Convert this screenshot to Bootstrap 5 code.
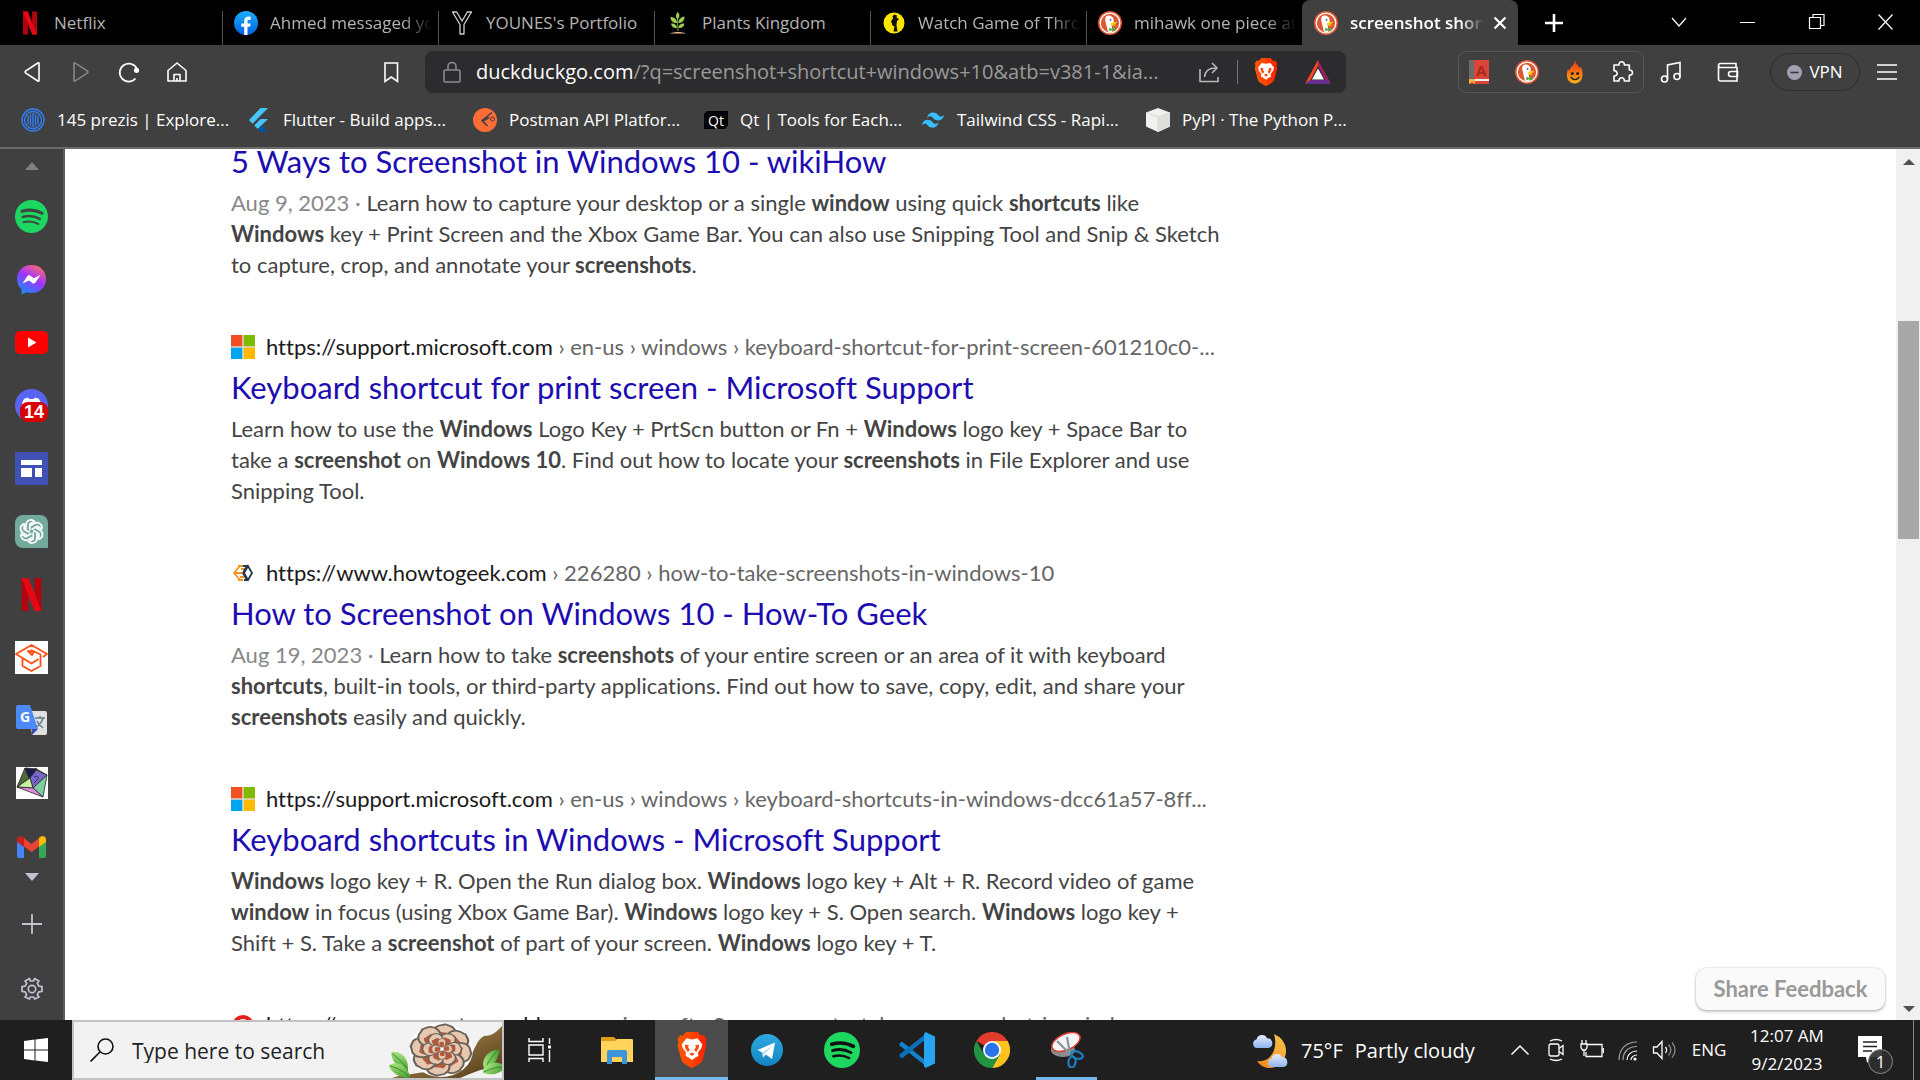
<!DOCTYPE html>
<html lang="en">
<head>
<meta charset="utf-8">
<meta name="viewport" content="width=device-width, initial-scale=1">
<title>screenshot shortcut windows 10 at DuckDuckGo</title>
<link href="https://cdn.jsdelivr.net/npm/bootstrap@5.3.0/dist/css/bootstrap.min.css" rel="stylesheet">
<style>
  :root { --chrome: #404040; --ui: "Open Sans", "Noto Sans", sans-serif; --page: Lato, "Open Sans", sans-serif; }
  body { font-family: var(--ui); font-size: 17px; line-height: 24px; background: #fff; }
  svg { display: block; flex: none; }
  button, .plain { background: none; border: 0; padding: 0; color: inherit; text-decoration: none; }
  .ico { width: 24px; height: 24px; }

  /* tab strip */
  .tabstrip { height: 45px; background: #000; color: #b4b4b4; padding-left: 6px; }
  .tabitem { width: 216px; padding: 0 6px 0 12px; gap: 12px; position: relative; }
  .tabitem + .tabitem:not(.current)::before { content: ""; position: absolute; left: 0; top: 11px; bottom: 0; width: 1px; background: #555; }
  .tabitem .label { -webkit-mask-image: linear-gradient(90deg, #000 82%, transparent); mask-image: linear-gradient(90deg, #000 82%, transparent); }
  .tabitem .label.whole { -webkit-mask-image: none; mask-image: none; }
  .tabitem.current { background: var(--chrome); color: #fff; border-radius: 8px 8px 0 0; font-weight: 600; }
  .tabitem.current .label { margin-right: -8px; }
  .winbtn { width: 69px; height: 45px; color: #fff; }

  /* toolbar */
  .toolbar { background: var(--chrome); color: #fff; padding: 6px 21px 0; }
  .navset { gap: 24px; }
  .bookmark { margin: 0 22px 0 190px; }
  .address { height: 42px; background: #2c2c2e; border-radius: 8px; padding: 0 15px; margin-right: 112px; gap: 12px; }
  .address .host { color: #fff; }
  .urltext { font-size: 20px; color: #9a9a9a; }
  .address .split { width: 1px; height: 24px; background: #77777a; margin: 0 4px; }
  .address .rewards { margin-left: 15px; }
  .extset { height: 42px; border: 1px solid #585858; border-radius: 8px; padding: 0 8px; gap: 24px; }
  .vpn { width: 90px; height: 38px; border: 1px solid #2c2c2c; border-radius: 19px; gap: 7px; margin: 0 15px 0 30px; }

  /* bookmarks */
  .bookmarks { background: var(--chrome); color: #fff; height: 56px; padding-left: 21px; display: grid; grid-template-columns: 226px 226px 231px 217px 225px 1fr; border-bottom: 2px solid #6b6b6b; }
  .bookmarks a { gap: 12px; }

  /* side panel */
  .dock { width: 65px; background: var(--chrome); border-right: 2px solid #5c5c5c; padding-top: 13px; color: #c3c3d0; }
  .dock .apps { gap: 30px; margin: 30px 0 10px; }
  .dock .apps button { width: 33px; height: 33px; position: relative; }
  .dock .count { position: absolute; right: 0; bottom: 0; width: 28px; height: 20px; border-radius: 8px; background: #d90000; color: #fff; font: bold 18px/20px "Liberation Sans", sans-serif; }

  /* results */
  .results { width: 1020px; padding-left: 166px; margin-top: -8px; font-family: var(--page); font-size: 22px; line-height: 31px; color: #444; font-variant-ligatures: none; }
  .hit { margin-bottom: 52px; white-space: nowrap; }
  .hit .site { height: 30px; gap: 11px; line-height: 30px; color: #666; }
  .hit .site b { font-weight: 400; color: #1a1a1a; }
  .hit h2 { font-size: 31px; line-height: 40px; font-weight: 400; margin: 5px 0 6px; }
  .hit h2 a { color: #1d0db0; text-decoration: none; }
  .hit p { margin: 0; }
  .hit .when { color: #888; }
  .feedback { position: absolute; right: 11px; bottom: 10px; width: 189px; height: 42px; border-radius: 10px; background: #fafafa; color: #999; font: bold 22px/42px var(--page); box-shadow: 0 0 2px rgba(0,0,0,.25), 0 2px 3px rgba(0,0,0,.2); }
  .scroll { width: 24px; background: #f0f0f0; padding: 10px 1px 8px 2px; }
  .scroll .thumb { width: 21px; height: 218px; margin-top: 156px; background: #a8a8a8; }

  /* taskbar */
  .taskbar { height: 60px; background: #1f1f1f; color: #fff; }
  .start { width: 72px; }
  .find { width: 432px; background: #f2f2f2; border: 2px solid #c2c2c2; padding-left: 16px; gap: 18px; overflow: hidden; position: relative; }
  .find input { width: 220px; border: 0; background: none; outline: 0; font-size: 21px; color: #222; padding: 2px 0 0; }
  .find input::placeholder { color: #222; opacity: 1; }
  .find .bloom { position: absolute; right: -2px; top: 0; }
  .pinset { gap: 2px; margin-left: 4px; }
  .pinset button { width: 73px; height: 60px; }
  .pinset .active { background: #4b4b4b; box-shadow: inset 0 -3px #76b9ed; }
  .pinset .open { background: linear-gradient(#76b9ed, #76b9ed) center bottom / 61px 3px no-repeat; }
  .weather { width: 250px; font-size: 20px; gap: 12px; padding-top: 2px; }
  .tray { width: 36px; height: 60px; }
  .lang { width: 50px; margin-left: 2px; }
  .clock { width: 90px; margin-left: 8px; line-height: 28px; }
  .notes { width: 75px; position: relative; }
  .notes .count { position: absolute; left: 36px; top: 29px; width: 25px; height: 25px; border-radius: 50%; background: rgba(45,45,45,.9); border: 1px solid #888; font-size: 17px; line-height: 23px; }
  .peek { width: 7px; border-left: 1px solid #888; margin-left: 6px; }
</style>
<script src="https://cdn.jsdelivr.net/npm/bootstrap@5.3.0/dist/js/bootstrap.bundle.min.js"></script>
</head>
<body class="vh-100 d-flex flex-column overflow-hidden">

<svg width="0" height="0" class="position-absolute" aria-hidden="true">
  <defs>
    <linearGradient id="gFb" x1="0" y1="0" x2="0" y2="1"><stop offset="0" stop-color="#19afff"/><stop offset="1" stop-color="#0062e0"/></linearGradient>
    <linearGradient id="gMs" x1=".2" y1="1" x2=".75" y2="0"><stop offset="0" stop-color="#0a93ff"/><stop offset=".55" stop-color="#a033ff"/><stop offset="1" stop-color="#ff6a70"/></linearGradient>
    <linearGradient id="gBr" x1="0" y1="0" x2="1" y2="0"><stop offset="0" stop-color="#ff5601"/><stop offset=".5" stop-color="#ff4500"/><stop offset="1" stop-color="#ff1f01"/></linearGradient>
    <linearGradient id="gTg" x1="0" y1="0" x2="0" y2="1"><stop offset="0" stop-color="#2fa9e0"/><stop offset="1" stop-color="#1285c2"/></linearGradient>
    <linearGradient id="gFl" x1="0" y1="0" x2="0" y2="1"><stop offset="0" stop-color="#e8341c"/><stop offset=".6" stop-color="#ff7a12"/><stop offset="1" stop-color="#f7b416"/></linearGradient>
    <linearGradient id="gMo" x1="1" y1="0" x2="0" y2="1"><stop offset="0" stop-color="#f7c64a"/><stop offset="1" stop-color="#f5821f"/></linearGradient>
    <linearGradient id="gCl" x1="0" y1="0" x2="0" y2="1"><stop offset="0" stop-color="#e4eefc"/><stop offset="1" stop-color="#8fb4ee"/></linearGradient>
    <linearGradient id="gLog" x1="0" y1="0" x2="1" y2="1"><stop offset="0" stop-color="#b39564"/><stop offset=".5" stop-color="#8a6a3b"/><stop offset="1" stop-color="#4e3817"/></linearGradient>
    <linearGradient id="gLeaf" x1="0" y1="0" x2="1" y2="1"><stop offset="0" stop-color="#b4ee88"/><stop offset="1" stop-color="#3f9a2e"/></linearGradient>
    <g id="petal"><path d="M-3-5C-10-9-12-18-8-22c2-3 5-2 7-4 3 1 6 0 8 3 4 4 3 13-3 18z" fill="#e6c8b0" stroke="#6a625a" stroke-width="1.800"/><path d="M-3-5C-7-9-8-15-5-18c3 1 6-1 9 1 2 4 1 8-1 12z" fill="#b25a3c"/></g>
  </defs>
  <symbol id="netflix" viewBox="0 0 20 33"><path d="M0 0h7v33H0zM13 0h7v33h-7z" fill="#b1060f"/><path d="M0 0h7l13 33h-7z" fill="#e50914"/></symbol>
  <symbol id="ddg" viewBox="0 0 24 24"><circle cx="12" cy="12" r="12" fill="#de5833"/><circle cx="12" cy="12" r="9.800" fill="none" stroke="#fff" stroke-width="1.300"/><path d="M8 5.500c1.500-1.600 5-1.300 6.400.6 1.400 1.800 1.500 3.600 1.300 5.600l-2 2.400.8 6.800c-2 .5-3.600.2-4.600-.3L7.600 11C7 9 7 7 8 5.500z" fill="#fff"/><circle cx="12.600" cy="8.800" r=".9" fill="#2d4f8e"/><path d="M13 12.200c2-1.100 4-1.400 6-1-.6 1.400-2.400 1.700-3.600 2.100 1 .6 2 .3 2.800.4-1 1.300-3.600 1.200-5 .5z" fill="#fdd20a"/><path d="M11 16.800l3 1 3.400-1.200.2 3.400-3.200-.8-3 1.100z" fill="#43b048"/></symbol>
  <symbol id="spotify" viewBox="0 0 33 33"><circle cx="16.500" cy="16.500" r="16.500" fill="#1ed760"/><g fill="none" stroke="var(--ink,#262626)" stroke-linecap="round"><path d="M7 11.200c7-2 14-1.300 20 2" stroke-width="3.200"/><path d="M7.800 17c6-1.700 12-.9 17 1.900" stroke-width="2.600"/><path d="M8.500 22.200c5-1.300 10-.8 14.600 1.700" stroke-width="2.200"/></g></symbol>
  <symbol id="brave" viewBox="0 0 30 36"><path d="M9 0h12l3 3.500 3-.3 2.500 4-1 3 1 3-4 15c-1 3-6 5.500-10.500 7.800C10.500 33.700 5.500 31.200 4.500 28.200L.5 13.200l1-3-1-3 2.500-4 3 .3z" fill="url(#gBr)"/><path d="M15 7.500l5.500-1.200 4.700 5.900-.8 3.800-3.400 4.500.4 3.500-3 1.500L15 28l-3.400-2.500-3-1.500.4-3.500L5.600 16l-.8-3.800 4.700-5.900z" fill="#fff"/><path d="M8 12.500l4 .7-1 1.700 1.800 3-2 2.200-2.600-4zM22 12.500l-4 .7 1 1.700-1.800 3 2 2.200 2.600-4zM12.300 21.800l2.700-1.400 2.700 1.400-2.700 2.200z" fill="#ff4a10"/></symbol>
  <symbol id="mslogo" viewBox="0 0 24 24"><path d="M0 0h24v24H0z" fill="#e4dcd8"/><path d="M0 0h11.300v11.300H0z" fill="#f25022"/><path d="M12.700 0H24v11.300H12.700z" fill="#7fba00"/><path d="M0 12.700h11.300V24H0z" fill="#00a4ef"/><path d="M12.700 12.700H24V24H12.700z" fill="#ffb900"/></symbol>
  <symbol id="cloud" viewBox="0 0 24 16"><path d="M5 16a5 5 0 0 1-.5-9.800A6.500 6.500 0 0 1 16.800 5 5.600 5.600 0 0 1 18.500 16z" fill="url(#gCl)"/></symbol>
  <symbol id="leaf" viewBox="0 0 30 16"><path d="M0 6C8-3 24 0 30 15 18 18 6 15 0 6z" fill="url(#gLeaf)"/><path d="M2 6.500C12 7 22 9 29 14.500" stroke="#2f7d24" fill="none"/></symbol>
</svg>

<header>
  <div class="tabstrip d-flex" role="tablist">
    <button class="tabitem d-flex align-items-center" role="tab"><svg class="ico" viewBox="0 0 24 24"><use href="#netflix" x="5" width="14" height="24"/></svg><span class="label whole text-nowrap overflow-hidden">Netflix</span></button>
    <button class="tabitem d-flex align-items-center" role="tab"><svg class="ico" viewBox="0 0 24 24"><circle cx="12" cy="12" r="12" fill="url(#gFb)"/><path d="M10.200 24v-8.200H7.300v-3.400h2.900v-2.200c0-3 1.700-4.600 4.400-4.600l2.100.2v2.900h-1.400c-1.400 0-1.800.8-1.800 1.700v2h3.100l-.5 3.400h-2.600V24z" fill="#fff"/></svg><span class="label text-nowrap overflow-hidden">Ahmed messaged you</span></button>
    <button class="tabitem d-flex align-items-center" role="tab"><svg class="ico" viewBox="0 0 24 24"><path d="M2.500 1h4.200L12 10l5.300-9h4.200L14 13.500V23h-4v-9.500z" fill="none" stroke="#d0d0d0" stroke-width="1.300" stroke-linejoin="round"/></svg><span class="label whole text-nowrap overflow-hidden">YOUNES's Portfolio</span></button>
    <button class="tabitem d-flex align-items-center" role="tab"><svg class="ico" viewBox="0 0 24 24"><path d="M12 20C12 15 11 10 12 3" stroke="#7cb342" fill="none"/><path d="M11.800 8C9 7 9.500 3 12 1c2 3 2 5-.2 7zM11 12C7 12 4.500 10 4.500 6 8 6 11 8 11 12zM12.500 12c0-4 2.500-6 6-6.500 0 4-2 6.500-6 6.500zM11 17c-3 .5-5.500-1-6-4.500 3-.5 6 1 6 4.500zM12.500 17c0-3.500 2.500-5 6-4.500-.5 3.500-3 5-6 4.500z" fill="#9ccc50"/><path d="M4 22.500c4-2 12-2 16 0z" fill="#e9b98c"/></svg><span class="label whole text-nowrap overflow-hidden">Plants Kingdom</span></button>
    <button class="tabitem d-flex align-items-center" role="tab"><svg class="ico" viewBox="0 0 24 24"><circle cx="12" cy="12" r="10.500" fill="#ffe600"/><path d="M12.500 3.500l2.500 1-.5 2 2.500 1.500-2 2-.5 4 1 6.500h-4l1-5-2-1-1.500-4.500 2-2.500-.5-2.500z" fill="#111"/></svg><span class="label text-nowrap overflow-hidden">Watch Game of Thrones</span></button>
    <button class="tabitem d-flex align-items-center" role="tab"><svg class="ico"><use href="#ddg"/></svg><span class="label text-nowrap overflow-hidden">mihawk one piece at D</span></button>
    <div class="tabitem current d-flex align-items-center" role="tab" aria-selected="true"><svg class="ico"><use href="#ddg"/></svg><span class="label flex-fill text-nowrap overflow-hidden">screenshot shortcut</span><button aria-label="Close tab"><svg class="ico" viewBox="0 0 24 24"><path d="M6.500 6.500l11 11M17.500 6.500l-11 11" stroke="#fff" stroke-width="2.200"/></svg></button></div>
    <button class="text-white ms-4" aria-label="New tab"><svg class="ico" viewBox="0 0 24 24"><path d="M12 3v18M3 12h18" stroke="#fff" stroke-width="2.600"/></svg></button>
    <div class="d-flex ms-auto">
      <button class="winbtn d-flex align-items-center justify-content-center" aria-label="Search tabs"><svg class="ico" viewBox="0 0 24 24" fill="none" stroke="#fff" stroke-width="1.200"><path d="M5 7l7 8 7-8"/></svg></button>
      <button class="winbtn d-flex align-items-center justify-content-center" aria-label="Minimize"><svg class="ico" viewBox="0 0 24 24"><path d="M4 11.500h15" stroke="#fff"/></svg></button>
      <button class="winbtn d-flex align-items-center justify-content-center" aria-label="Restore"><svg class="ico" viewBox="0 0 24 24" fill="none" stroke="#fff" stroke-width="1.200"><path d="M4.500 6.500h11v11h-11zM8 6.500V3.500h11v11h-3.500"/></svg></button>
      <button class="winbtn d-flex align-items-center justify-content-center" aria-label="Close"><svg class="ico" viewBox="0 0 24 24"><path d="M4.500 3.500l14 15M18.500 3.500l-14 15" stroke="#fff" stroke-width="1.200"/></svg></button>
    </div>
  </div>

  <div class="toolbar d-flex align-items-center">
    <div class="navset d-flex">
      <button aria-label="Back"><svg class="ico" viewBox="0 0 24 24"><path d="M18 3.500v17c0 .8-.6 1-1.200.5L4.500 12.800a1 1 0 0 1 0-1.600L16.800 3c.6-.5 1.200-.3 1.200.5z" fill="none" stroke="#fff" stroke-width="1.600"/></svg></button>
      <button aria-label="Forward"><svg class="ico" viewBox="0 0 24 24"><path d="M5 3.500v17c0 .8.600 1 1.200.5l12.300-8.200a1 1 0 0 0 0-1.600L6.200 3C5.600 2.500 5 2.700 5 3.500z" fill="none" stroke="#8c8c8c" stroke-width="1.500"/></svg></button>
      <button aria-label="Reload"><svg class="ico" viewBox="0 0 24 24"><path d="M18.500 18.500A9 9 0 1 1 20 9" fill="none" stroke="#fff" stroke-width="1.700"/><circle cx="19.500" cy="10.300" r="2.600" fill="#fff"/></svg></button>
      <button aria-label="Home"><svg class="ico" viewBox="0 0 24 24"><path d="M3 10.500L12 3l9 7.500V21H3zM9 21v-6.500h6V21M12 21v-3" fill="none" stroke="#fff" stroke-width="1.600" stroke-linejoin="round"/></svg></button>
    </div>
    <button class="bookmark" aria-label="Bookmark this tab"><svg class="ico" viewBox="0 0 24 24"><path d="M6 3h12.500v18.500l-6.200-4.500L6 21.500z" fill="none" stroke="#fff" stroke-width="1.600"/></svg></button>
    <div class="address d-flex align-items-center flex-fill">
      <svg class="ico" viewBox="0 0 24 24" fill="none" stroke="#8a8a8f" stroke-width="1.600"><rect x="4" y="10" width="16" height="12" rx="1.500"/><path d="M8 10V6.500a4 4 0 0 1 8 0V10"/></svg>
      <div class="urltext text-nowrap overflow-hidden flex-fill"><span class="host">duckduckgo.com</span>/?q=screenshot+shortcut+windows+10&amp;atb=v381-1&amp;ia...</div>
      <button aria-label="Share"><svg class="ico" viewBox="0 0 24 24" fill="none" stroke="#b8b8b8" stroke-width="1.600"><path d="M3 9v12.500h18V17M7.500 17c.5-5.500 4-9 11-9M15 3l5 5-5 5"/></svg></button>
      <span class="split"></span>
      <button aria-label="Brave Shields"><svg width="24" height="28"><use href="#brave" width="24" height="28"/></svg></button>
      <button class="rewards" aria-label="Brave Rewards"><svg width="26" height="24" viewBox="0 0 26 24"><path d="M13 0L0 24l5-3 8-15z" fill="#ff4724"/><path d="M13 0l13 24-5-3-8-15z" fill="#9e1f63"/><path d="M0 24h26l-5-4H5z" fill="#662d91"/><path d="M13 8.500l6 11H7z" fill="#fff"/></svg></button>
    </div>
    <div class="extset d-flex align-items-center">
      <button aria-label="Dictionary"><svg class="ico" viewBox="0 0 24 24"><path d="M2 0h20v24H4a2 2 0 0 1-2-2z" fill="#db4437"/><path d="M2 0h5v20H2z" fill="#6b6b6b"/><path d="M7 19h15v2H7z" fill="#eee"/><path d="M2 19h6v5l-3-2-3 2z" fill="#f4b63a"/><text x="9" y="15.500" font-size="15" font-weight="bold" fill="#a52a20">A</text></svg></button>
      <button aria-label="DuckDuckGo Privacy"><svg class="ico"><use href="#ddg"/></svg></button>
      <button aria-label="Flame"><svg class="ico" viewBox="0 0 24 24"><path d="M12 0c.5 4 3.500 5 4 8l2-1c3.500 8 1 16.500-6 16.500S2 17 5 9l1.500 2c0-4 5-5 5.500-11z" fill="url(#gFl)"/><circle cx="9.300" cy="13.500" r="1.500" fill="#222"/><circle cx="14.700" cy="13.500" r="1.500" fill="#222"/><path d="M7.500 17c3 3.500 6 3.500 9 0" fill="none" stroke="#222" stroke-width="1.300"/></svg></button>
      <button aria-label="Extensions"><svg class="ico" viewBox="0 0 24 24"><path d="M3 5h5a2.700 2.700 0 1 1 5.300 0h5v5a2.700 2.700 0 1 1 0 5.300V21h-5a2.700 2.700 0 1 0-5.300 0H3v-5a2.700 2.700 0 1 0 0-5.300z" fill="none" stroke="#fff" stroke-width="1.600" stroke-linejoin="round"/></svg></button>
    </div>
    <button class="ms-3" aria-label="Media"><svg class="ico" viewBox="0 0 24 24" fill="none" stroke="#fff" stroke-width="1.600"><circle cx="4.500" cy="19" r="3"/><circle cx="17" cy="16.500" r="3"/><path d="M7.500 19V5L20 2.500v14"/></svg></button>
    <button class="ms-4 ps-2" aria-label="Wallet"><svg class="ico" viewBox="0 0 24 24" fill="none" stroke="#fff" stroke-width="1.600"><path d="M20 8V3.500H4.500a2 2 0 0 0 0 4H21V21H4.500a2 2 0 0 1-2-2V5.500M21.500 11.500H15a2.500 2.500 0 0 0 0 5h6.500z"/></svg></button>
    <button class="vpn d-flex align-items-center justify-content-center"><svg width="15" height="15" viewBox="0 0 15 15"><circle cx="7.500" cy="7.500" r="7.500" fill="#a0a2b4"/><path d="M3.500 7.500h8" stroke="#333" stroke-width="1.600"/></svg>VPN</button>
    <button aria-label="Menu"><svg class="ico" viewBox="0 0 24 24"><path d="M2 5h20M2 12h20M2 19h20" stroke="#fff" stroke-width="1.600"/></svg></button>
  </div>

  <nav class="bookmarks" aria-label="Bookmarks">
    <a href="#" class="plain d-flex align-items-center text-nowrap"><svg class="ico" viewBox="0 0 24 24" fill="none" stroke="#3181ff" stroke-width="1.300"><circle cx="12" cy="12" r="11"/><circle cx="12" cy="12" r="8.500"/><path d="M7 7.500v9M9.500 6v12M12 5v14M14.500 6v12M17 7.500v9"/></svg>145 prezis | Explore...</a>
    <a href="#" class="plain d-flex align-items-center text-nowrap"><svg class="ico" viewBox="0 0 24 24"><path d="M13.500 0L2 12l3.500 3.700L21 0zM13.500 11l-6.300 6.400 3.600 3.600L21 11z" fill="#47c5fb"/><path d="M10.800 21l2.900 3H21l-6.600-6.600z" fill="#00569e"/></svg>Flutter - Build apps...</a>
    <a href="#" class="plain d-flex align-items-center text-nowrap"><svg class="ico" viewBox="0 0 24 24"><circle cx="12" cy="12" r="12" fill="#ff6c37"/><path d="M19 4.500L9 12.500l5.500 5.500M10 13l6-3.500" stroke="#404040" stroke-width="1.600" fill="none"/><circle cx="19.500" cy="11" r="2" fill="none" stroke="#404040"/></svg>Postman API Platfor...</a>
    <a href="#" class="plain d-flex align-items-center text-nowrap"><svg class="ico" viewBox="0 0 24 24"><path d="M3 3h21v14.500l-3 3.500H0V6z" fill="#000"/><text x="4" y="17.500" font-size="14" fill="#fff">Qt</text></svg>Qt | Tools for Each...</a>
    <a href="#" class="plain d-flex align-items-center text-nowrap"><svg class="ico" viewBox="0 0 24 24"><path d="M6 10C7 6 9 4.500 12 4.500c4.500 0 5 3.400 7.300 4 1.500.4 2.800-.2 4-1.700-1 3.800-3.200 5.700-6 5.700-4.500 0-5-3.400-7.300-4C8.500 8.100 7.200 8.600 6 10zM.5 17.500c1-3.800 3-5.700 6-5.700 4.500 0 5 3.400 7.300 4 1.500.4 2.800-.2 4-1.700-1 3.800-3.200 5.700-6 5.700-4.500 0-5-3.400-7.300-4-1.500-.4-2.800.2-4 1.700z" fill="#38bdf8"/></svg>Tailwind CSS - Rapi...</a>
    <a href="#" class="plain d-flex align-items-center text-nowrap"><svg class="ico" viewBox="0 0 24 24"><path d="M12 0l12 4.500v14L12 24 0 18.500v-14z" fill="#f1f1ee"/><path d="M0 4.500L12 9l12-4.500M12 9v15" fill="none" stroke="#cfcfca" stroke-width=".8"/><path d="M12 9l12-4.500v14L12 24z" fill="#dededb"/></svg>PyPI · The Python P...</a>
  </nav>
</header>

<div class="flex-fill d-flex overflow-hidden">
  <aside class="dock d-flex flex-column align-items-center" aria-label="Side panel">
    <svg width="14" height="8" viewBox="0 0 14 8"><path d="M7 0l7 8H0z" fill="#80808a"/></svg>
    <div class="apps d-flex flex-column align-items-center">
      <button aria-label="Spotify"><svg width="33" height="33" style="--ink:#3a4a3e"><use href="#spotify"/></svg></button>
      <button aria-label="Messenger"><svg width="33" height="33" viewBox="0 0 33 33"><path d="M16.500 2C8 2 2 8 2 16c0 4.300 1.700 7.800 4.500 10.300V31.500l4.800-2.200c1.600.4 3.300.7 5.200.7C25 30 31 24 31 16S25 2 16.500 2z" fill="url(#gMs)"/><path d="M7.500 20.500l4.800-7.300c.8-1.100 2-1.300 3-.5l3.500 2.600 6.700-3.300-5 7.600c-.8 1.200-2.200 1.300-3.200.5l-3.200-2.600z" fill="#fff"/></svg></button>
      <button aria-label="YouTube"><svg width="33" height="33" viewBox="0 0 33 33"><rect y="5" width="33" height="23" rx="5" fill="#f00"/><path d="M13 11.500v10l8.500-5z" fill="#fff"/></svg></button>
      <button aria-label="Discord, 14 notifications"><svg width="33" height="33" viewBox="0 0 33 33"><circle cx="16.500" cy="16.500" r="16.500" fill="#5865f2"/><path d="M6.500 20c0-5 1.300-8 2.700-10.200l4-1.300.8 1.500h5l.8-1.500 4 1.300C25.200 12 26.500 15 26.500 20z" fill="#fff"/></svg><span class="count">14</span></button>
      <button aria-label="News"><svg width="33" height="33" viewBox="0 0 33 33"><path d="M0 0h33v33H0z" fill="#3f51b5"/><path d="M6 8h21v5H6zM6 16h11v9H6zM20 16h7v9h-7z" fill="#fff"/></svg></button>
      <button aria-label="ChatGPT"><svg width="33" height="33" viewBox="0 0 33 33"><path d="M8 0h17a8 8 0 0 1 8 8v25H8a8 8 0 0 1-8-8V8a8 8 0 0 1 8-8z" fill="#74aa9c"/><g transform="translate(16.500 16.500)" fill="none" stroke="#fff" stroke-width="1.700" stroke-linejoin="round"><g id="arm"><path d="M-5.500-2v-4.900A5 5 0 0 1 3-10.200L-1.700-7.500V-1"/></g><use href="#arm" transform="rotate(60)"/><use href="#arm" transform="rotate(120)"/><use href="#arm" transform="rotate(180)"/><use href="#arm" transform="rotate(240)"/><use href="#arm" transform="rotate(300)"/></g></svg></button>
      <button aria-label="Netflix"><svg width="33" height="33"><use href="#netflix"/></svg></button>
      <button aria-label="Courses"><svg width="33" height="33" viewBox="0 0 33 33"><path d="M0 0h33v33H0z" fill="#fff"/><path d="M28 16l4-3L16.500 4 1 13l15.500 9.500 7-4.500M7.500 17v8l9 5 9-5V13.500l-9.500-4.500M13 10l6 1-2 3z" fill="none" stroke="#ff4f12" stroke-width="1.800" stroke-linejoin="round"/></svg></button>
      <button aria-label="Google Translate"><svg width="33" height="33" viewBox="0 0 33 33"><path d="M14 7h16a2 2 0 0 1 2 2v20a2 2 0 0 1-2 2H17z" fill="#dfe0e2"/><path d="M17 25h6l-6 6z" fill="#3949ab"/><path d="M3 1h12l8 24H3a2 2 0 0 1-2-2V3a2 2 0 0 1 2-2z" fill="#4c8bf5"/><text x="5" y="18" font-size="14" font-weight="bold" fill="#fff">G</text><path d="M20 14h10M25 12v2M28 14c-1 4-4 7-7 9M22 17c1 3 4 5 6 7" stroke="#607d8b" stroke-width="1.400" fill="none"/></svg></button>
      <button aria-label="Geometry"><svg width="33" height="33" viewBox="0 0 33 33"><path d="M1 0h32v32H1z" fill="#fff"/><g stroke="#222" stroke-width=".8"><path d="M10 1L2 20l13-9z" fill="#4f6b35"/><path d="M10 1l12 1-4 6-4 3z" fill="#1c1a4a"/><path d="M20 1l12 7-8-1z" fill="#c9a046"/><path d="M15 11l6-8 11 5-14 13z" fill="#7a68c8"/><path d="M2 20l13-9 3 10z" fill="#c8f0a0"/><path d="M18 21L32 8l-4 22z" fill="#7fcca0"/><path d="M2 20l16 1 10 9z" fill="#e08be0"/></g><path d="M19 10c4-2 6 1 3 3l-3 3" fill="none" stroke="#2e2a66"/></svg></button>
      <button aria-label="Gmail"><svg width="33" height="33" viewBox="0 0 33 33"><path d="M2 9v17a2 2 0 0 0 2 2h5V14z" fill="#4285f4"/><path d="M31 9v17a2 2 0 0 1-2 2h-5V14z" fill="#34a853"/><path d="M9 8v8.500L16.500 22l7.500-5.500V8l-7.500 6z" fill="#ea4335"/><path d="M2 9.500V12l7 5V8L7 6.500C5 5 2 6.500 2 9.500z" fill="#c5221f"/><path d="M31 9.500V12l-7 5V8l2-1.500c2-1.500 5 0 5 3z" fill="#fbbc04"/></svg></button>
    </div>
    <svg width="14" height="8" viewBox="0 0 14 8"><path d="M0 0h14L7 8z" fill="#c3c3d0"/></svg>
    <button class="mt-auto mb-4" aria-label="Add"><svg width="24" height="24" viewBox="0 0 24 24"><path d="M12 2v20M2 12h20" stroke="#c3c3d0" stroke-width="1.800"/></svg></button>
    <button class="mt-3 mb-3 pb-1" aria-label="Settings"><svg width="24" height="24" viewBox="0 0 24 24" fill="none" stroke="#c3c3d0" stroke-width="1.700" stroke-linejoin="round"><path d="M9.500 2.500l.8 2.500h3.400l.8-2.500 4.500 2.600-1.700 2.200 1.500 2.900 3.200.4v4.800l-3.200.4-1.500 2.900 1.700 2.200-4.500 2.100-.8-2h-3.400l-.8 2L5 20.900l1.700-2.200-1.500-2.900-3.200-.4v-4.800l3.200-.4 1.500-2.900L5 5.100z"/><circle cx="12" cy="13" r="3.700"/></svg></button>
  </aside>

  <main class="flex-fill position-relative overflow-hidden">
    <div class="results">
      <article class="hit">
        <h2 class="mt-0"><a href="#">5 Ways to Screenshot in Windows 10 - wikiHow</a></h2>
        <p><span class="when">Aug 9, 2023 · </span> Learn how to capture your desktop or a single <strong>window</strong> using quick <strong>shortcuts</strong> like<br><strong>Windows</strong> key + Print Screen and the Xbox Game Bar. You can also use Snipping Tool and Snip &amp; Sketch<br>to capture, crop, and annotate your <strong>screenshots</strong>.</p>
      </article>
      <article class="hit">
        <div class="site d-flex align-items-center"><svg class="ico"><use href="#mslogo"/></svg><span><b>https://support.microsoft.com</b> › en-us › windows › keyboard-shortcut-for-print-screen-601210c0-...</span></div>
        <h2><a href="#">Keyboard shortcut for print screen - Microsoft Support</a></h2>
        <p>Learn how to use the <strong>Windows</strong> Logo Key + PrtScn button or Fn + <strong>Windows</strong> logo key + Space Bar to<br>take a <strong>screenshot</strong> on <strong>Windows 10</strong>. Find out how to locate your <strong>screenshots</strong> in File Explorer and use<br>Snipping Tool.</p>
      </article>
      <article class="hit">
        <div class="site d-flex align-items-center"><svg class="ico" viewBox="0 0 24 24" fill="none" stroke-width="1.800"><path d="M9 5L3 12l6 7M12 5H7M12 19H7M3 12h8" stroke="#f7941d"/><path d="M10 8h4M9 16h4" stroke="#f7941d"/><path d="M12 5h4l-4 7 4 7h-3M17 5l-4 7 4 7 4-7z" stroke="#24384a"/></svg><span><b>https://www.howtogeek.com</b> › 226280 › how-to-take-screenshots-in-windows-10</span></div>
        <h2><a href="#">How to Screenshot on Windows 10 - How-To Geek</a></h2>
        <p><span class="when">Aug 19, 2023 · </span> Learn how to take <strong>screenshots</strong> of your entire screen or an area of it with keyboard<br><strong>shortcuts</strong>, built-in tools, or third-party applications. Find out how to save, copy, edit, and share your<br><strong>screenshots</strong> easily and quickly.</p>
      </article>
      <article class="hit">
        <div class="site d-flex align-items-center"><svg class="ico"><use href="#mslogo"/></svg><span><b>https://support.microsoft.com</b> › en-us › windows › keyboard-shortcuts-in-windows-dcc61a57-8ff...</span></div>
        <h2><a href="#">Keyboard shortcuts in Windows - Microsoft Support</a></h2>
        <p><strong>Windows</strong> logo key + R. Open the Run dialog box. <strong>Windows</strong> logo key + Alt + R. Record video of game<br><strong>window</strong> in focus (using Xbox Game Bar). <strong>Windows</strong> logo key + S. Open search. <strong>Windows</strong> logo key +<br>Shift + S. Take a <strong>screenshot</strong> of part of your screen. <strong>Windows</strong> logo key + T.</p>
      </article>
      <article class="hit">
        <div class="site d-flex align-items-center"><svg class="ico" viewBox="0 0 24 24"><circle cx="12" cy="13" r="9" fill="none" stroke="#e8201c" stroke-width="4"/></svg><span><b>https://www.computerworld.com</b> › microsoft › Some-ways-to-take-a-screenshot-in-wind...</span></div>
      </article>
    </div>
    <button class="feedback">Share Feedback</button>
  </main>
  <div class="scroll d-flex flex-column align-items-center" aria-hidden="true">
    <svg width="12" height="6" viewBox="0 0 12 6"><path d="M6 0l6 6H0z" fill="#505050"/></svg>
    <div class="thumb"></div>
    <svg class="mt-auto" width="12" height="6" viewBox="0 0 12 6"><path d="M0 0h12L6 6z" fill="#505050"/></svg>
  </div>
</div>

<footer class="taskbar d-flex flex-shrink-0">
  <button class="start d-flex align-items-center justify-content-center" aria-label="Start"><svg width="24" height="24" viewBox="0 0 24 24"><path d="M0 3l10.500-1.500v10H0zM11.500 1.400L24 0v11.500H11.500zM0 12.500h10.500v10L0 21zM11.500 12.500H24V24l-12.500-1.400z" fill="#fff"/></svg></button>
  <label class="find d-flex align-items-center">
    <svg width="24" height="24" viewBox="0 0 24 24" fill="none" stroke="#111" stroke-width="1.600"><circle cx="15.500" cy="8.500" r="7.500"/><path d="M10 14L.5 23.500"/></svg>
    <input type="text" placeholder="Type here to search" aria-label="Type here to search">
    <svg class="bloom" width="116" height="56" viewBox="0 0 116 56">
      <path d="M4 56C20 50 55 52 80 36c8-8 8-18 16-22 10 0 14-6 20-12v40c-20 4-30 8-44 14z" fill="url(#gLog)"/>
      <use href="#leaf" width="24" height="14" transform="translate(6 26) rotate(32)"/><use href="#leaf" width="24" height="14" transform="translate(2 38) rotate(14)"/>
      <use href="#leaf" width="24" height="13" transform="translate(92 46) rotate(-70)"/><use href="#leaf" width="24" height="13" transform="translate(92 46) rotate(-28)"/>
      <ellipse cx="53" cy="28" rx="32" ry="27" fill="#fff"/>
      <g transform="translate(53 28) scale(1.180 1)">
        <use href="#petal" transform="rotate(10)"/><use href="#petal" transform="rotate(55)"/><use href="#petal" transform="rotate(100)"/><use href="#petal" transform="rotate(145)"/><use href="#petal" transform="rotate(190)"/><use href="#petal" transform="rotate(235)"/><use href="#petal" transform="rotate(280)"/><use href="#petal" transform="rotate(325)"/>
      </g>
      <g transform="translate(54 27) scale(.75 .65)">
        <use href="#petal" transform="rotate(30)"/><use href="#petal" transform="rotate(90)"/><use href="#petal" transform="rotate(150)"/><use href="#petal" transform="rotate(210)"/><use href="#petal" transform="rotate(270)"/><use href="#petal" transform="rotate(330)"/>
      </g>
      <g transform="translate(54 27) scale(.4)">
        <use href="#petal"/><use href="#petal" transform="rotate(90)"/><use href="#petal" transform="rotate(180)"/><use href="#petal" transform="rotate(270)"/>
      </g>
    </svg>
  </label>
  <button class="start d-flex align-items-center justify-content-center" aria-label="Task view"><svg width="24" height="24" viewBox="0 0 24 24" fill="none" stroke="#fff" stroke-width="1.400"><path d="M1 0v3.500h14V0M1 24v-3.500h14V24M1 7h14v10H1zM21.500 0v6M21.500 12v12"/><path d="M20 7.500h3v3h-3z" fill="#fff" stroke="none"/></svg></button>
  <div class="pinset d-flex">
    <button class="d-flex align-items-center justify-content-center" aria-label="File Explorer"><svg width="34" height="28" viewBox="0 0 34 28"><path d="M1 2a1 1 0 0 1 1-1h12l3 3v5H1z" fill="#e09c14"/><path d="M1 5h14l2-2h15a1 1 0 0 1 1 1v22H1z" fill="#ffd35c"/><path d="M7 28V16a2 2 0 0 1 2-2h16a2 2 0 0 1 2 2v12h-5v-7H12v7z" fill="#3d96dc"/></svg></button>
    <button class="active d-flex align-items-center justify-content-center" aria-label="Brave"><svg width="30" height="36"><use href="#brave"/></svg></button>
    <button class="d-flex align-items-center justify-content-center" aria-label="Telegram"><svg width="32" height="32" viewBox="0 0 32 32"><circle cx="16" cy="16" r="16" fill="url(#gTg)"/><path d="M6.500 16L24 8.500l-3 16.500-6-4.500-3 3-.7-5z" fill="#fff"/><path d="M11.500 18.500L21 12l-7 7.500-2 4z" fill="#c0dcee"/></svg></button>
    <button class="d-flex align-items-center justify-content-center" aria-label="Spotify"><svg width="36" height="36" style="--ink:#111"><use href="#spotify"/></svg></button>
    <button class="d-flex align-items-center justify-content-center" aria-label="Visual Studio Code"><svg width="36" height="36" viewBox="0 0 36 36"><path d="M3 9.500L27 29v5L.8 13.800a1.800 1.800 0 0 1 0-2.500z" fill="#1382cc"/><path d="M3 26.500L27 7V1.500L.8 22.300a1.800 1.800 0 0 0 0 2.500z" fill="#0d6fb8"/><path d="M26.500 0L36 4.500v27L26.500 36 25 34V2z" fill="#25a4f0"/></svg></button>
    <button class="d-flex align-items-center justify-content-center" aria-label="Chrome"><svg width="36" height="36" viewBox="0 0 36 36"><path d="M2.400 9A18 18 0 0 1 33.600 9L18 18z" fill="#e33b2e"/><path d="M33.600 9H18l7.800 13.500L18 36A18 18 0 0 0 33.600 9z" fill="#fcc31e"/><path d="M2.400 9A18 18 0 0 0 18 36l7.800-13.500H10.200z" fill="#229342"/><path d="M18 9h15.600L25 18z" fill="#fcc31e"/><circle cx="18" cy="18" r="9" fill="#fff"/><circle cx="18" cy="18" r="7.200" fill="#2a73e8"/></svg></button>
    <button class="open d-flex align-items-center justify-content-center" aria-label="Snipping Tool"><svg width="36" height="36" viewBox="0 0 36 36"><ellipse cx="14" cy="18" rx="12" ry="7" fill="#8c8c8c"/><ellipse cx="17" cy="10" rx="15" ry="8" transform="rotate(-24 17 10)" fill="#f4f4f4" stroke="#d83a34" stroke-width="1.500"/><path d="M8 9l12 12M18 5l3 17" stroke="#8795a0" stroke-width="2.200"/><g fill="none" stroke="#1c7fc4" stroke-width="2.200"><ellipse cx="28" cy="23" rx="6" ry="3.500" transform="rotate(20 28 23)"/><ellipse cx="23" cy="30" rx="3.500" ry="5.500" transform="rotate(8 23 30)"/></g></svg></button>
  </div>
  <button class="weather d-flex align-items-center ms-auto"><svg width="37" height="36" viewBox="0 0 37 36"><path d="M22 1c14 6 16 22 5 31-7 5-17 4-22-4 11 2 22-9 17-27z" fill="url(#gMo)"/><use href="#cloud" x="0" y="1" width="22" height="14"/><use href="#cloud" x="15" y="20" width="22" height="14"/></svg><span>75°F</span><span>Partly cloudy</span></button>
  <button class="tray d-flex align-items-center justify-content-center" aria-label="Show hidden icons"><svg class="ico" viewBox="0 0 24 24"><path d="M3.500 16.500L12 8l8.500 8.500" fill="none" stroke="#fff" stroke-width="1.500"/></svg></button>
  <button class="tray d-flex align-items-center justify-content-center" aria-label="Camera"><svg class="ico" viewBox="0 0 24 24" fill="none" stroke="#fff" stroke-width="1.300"><rect x="5" y="6" width="10" height="12" rx="2"/><path d="M15 10.500l4-3v9l-4-3M6 3c4-2 8-2 12 0M6 21c4 2 8 2 12 0"/></svg></button>
  <button class="tray d-flex align-items-center justify-content-center" aria-label="Battery"><svg class="ico" viewBox="0 0 24 24" fill="none" stroke="#fff" stroke-width="1.300"><path d="M7 6.500h15v12H6V14M23.500 10v5M2 2v4M6 2v4M1 6h6v3.500L5.500 12h-3L1 9.500zM4 12v6"/></svg></button>
  <button class="tray d-flex align-items-center justify-content-center" aria-label="Wi-Fi"><svg class="ico" viewBox="0 0 24 24" fill="none" stroke="#fff" stroke-width="1.200"><g stroke="#a0a0a0"><path d="M3 22C3 11 10 4 21 4M7 22C7 14 12 8.500 21 8.500"/></g><path d="M11 22c0-5 4-9 10-9M15 22c0-3 3-5 6-5"/><circle cx="19" cy="21" r="1.600" fill="#fff" stroke="none"/></svg></button>
  <button class="tray d-flex align-items-center justify-content-center" aria-label="Volume"><svg class="ico" viewBox="0 0 24 24" fill="none" stroke="#fff" stroke-width="1.300"><path d="M1.500 9H5l5-5.500v17L5 15H1.500zM13.500 9c1.500 2 1.500 4 0 6"/><path d="M16.500 6.500c3 3.500 3 7.500 0 11M20 4.500c4 5 4 10 0 15" stroke="#888"/></svg></button>
  <button class="lang">ENG</button>
  <button class="clock text-nowrap">12:07 AM<br>9/2/2023</button>
  <button class="notes d-flex align-items-center justify-content-center" aria-label="Notifications"><svg width="24" height="28" viewBox="0 0 24 28"><path d="M0 0h24v21H13l-4 6-1-6H0z" fill="#fff"/><path d="M5 6h14M5 10.500h14M5 15h9" stroke="#222" stroke-width="1.300"/></svg><span class="count">1</span></button>
  <div class="peek"></div>
</footer>
</body>
</html>
